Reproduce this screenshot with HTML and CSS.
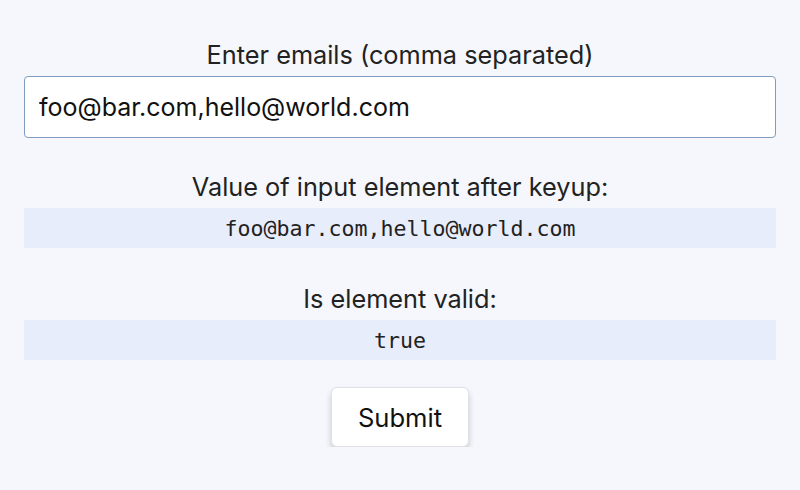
FILE: index.html
```html
<!DOCTYPE html>
<html>
<head>
<meta charset="utf-8">
<link rel="stylesheet" href="styles.css">
</head>
<body>
<main class="page">
  <label class="label label-first" for="emails">Enter emails (comma separated)</label>
  <input id="emails" class="field" type="text" value="foo@bar.com,hello@world.com">
  <div class="label">Value of input element after keyup:</div>
  <pre class="code">foo@bar.com,hello@world.com</pre>
  <div class="label label-third">Is element valid:</div>
  <pre class="code">true</pre>
  <div class="actions"><button class="btn" type="button">Submit</button></div>
</main>
</body>
</html>
```
FILE: styles.css
```css
html, body {
  margin: 0;
  padding: 0;
  background: #f5f7fc;
}
body {
  font-family: Inter, "Liberation Sans", Arial, sans-serif;
  color: #222;
}
.page {
  display: flex;
  flex-direction: column;
  padding: 40px 24px 0 24px;
}
.label {
  display: block;
  text-align: center;
  font-size: 25.3px;
  line-height: 30px;
  color: #222;
  margin-top: 34px;
  margin-bottom: 6px;
}
.label-first {
  margin-top: 0;
}
.label-third {
  margin-top: 36px;
}
.field {
  box-sizing: border-box;
  width: 100%;
  height: 62px;
  border: 1px solid #7f9cc0;
  border-radius: 4px;
  background: #fff;
  padding: 0 14px;
  font-family: Inter, "Liberation Sans", Arial, sans-serif;
  font-size: 25px;
  color: #111;
  outline: none;
}
.code {
  margin: 0;
  height: 40px;
  line-height: 41px;
  background: #e8edfb;
  text-align: center;
  font-family: "DejaVu Sans Mono", monospace;
  font-size: 21.6px;
  color: #222;
}
.actions {
  display: flex;
  justify-content: center;
  margin-top: 27px;
}
.btn {
  width: 138px;
  height: 60px;
  border: 1px solid #e0e0e6;
  border-radius: 6px;
  background: #fff;
  font-family: Inter, "Liberation Sans", Arial, sans-serif;
  font-size: 25.6px;
  color: #111;
  box-shadow: 0 4px 6px rgba(0,0,0,0.18);
}
```
